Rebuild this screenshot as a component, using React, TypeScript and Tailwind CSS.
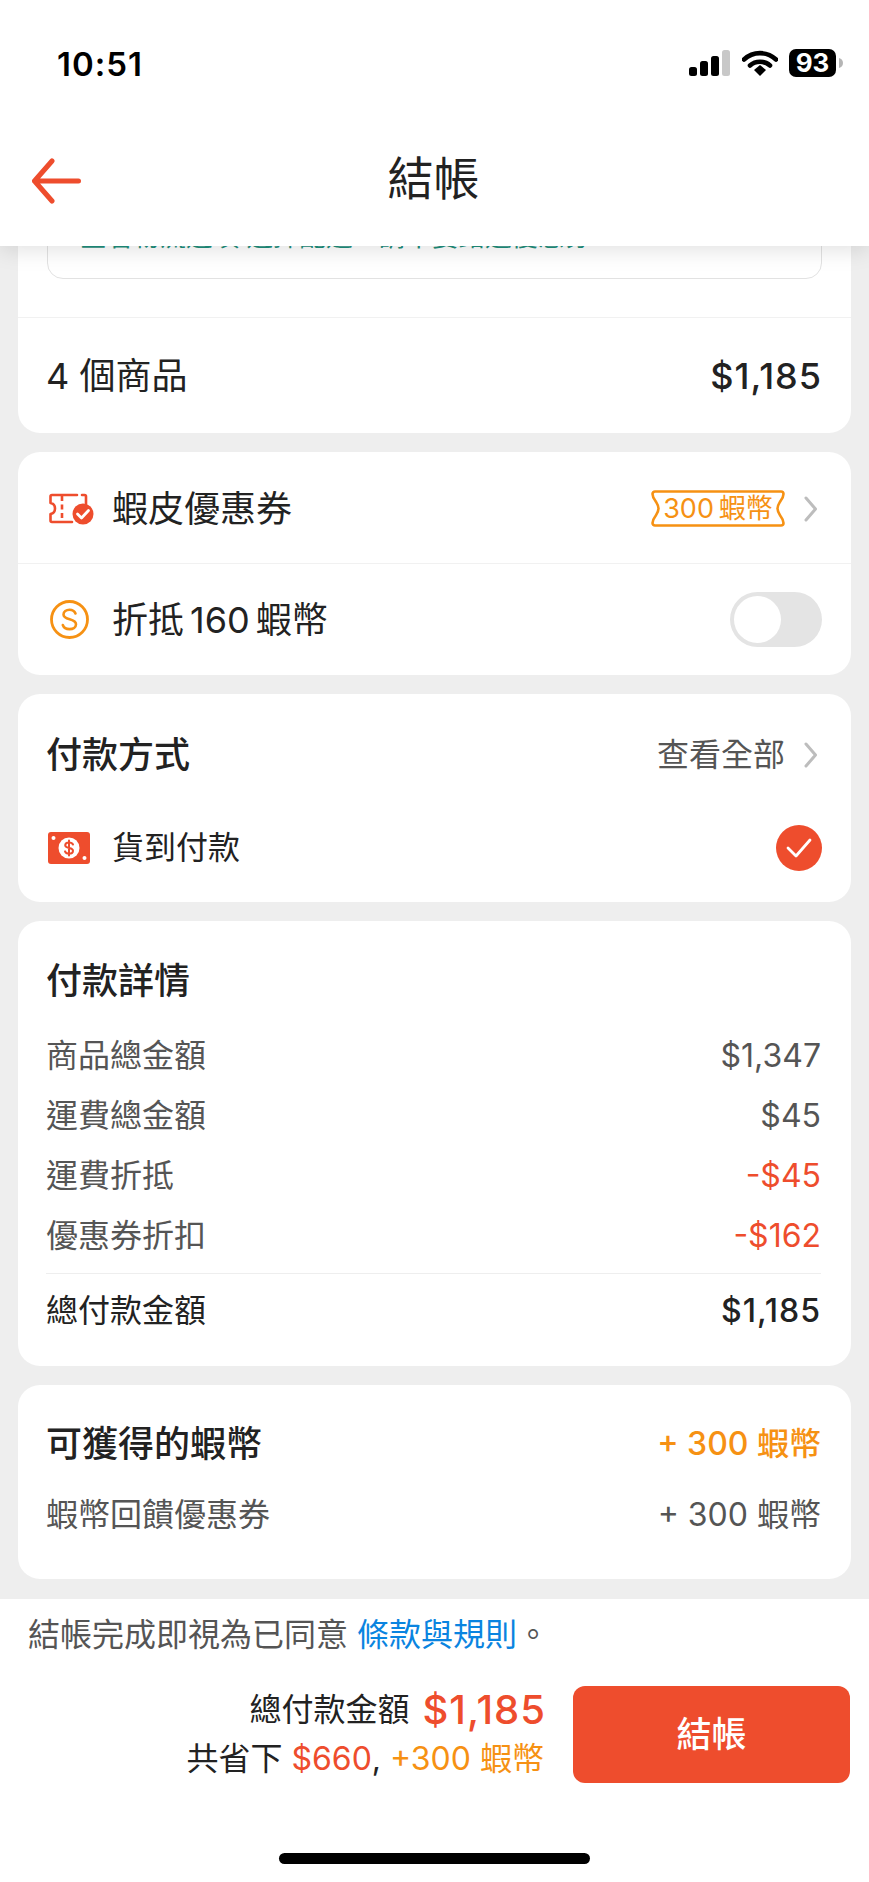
import { ReactNode } from "react";

const Chevron = () => (
    <svg width="14" height="26" viewBox="0 0 14 26" fill="none" className="shrink-0">
        <path d="M2 2l9.500 11L2 24" stroke="#bdbdbd" strokeWidth="3" strokeLinecap="round" strokeLinejoin="round" />
    </svg>
);

const Card = ({ className = "", children }: { className?: string; children: ReactNode }) => (
    <section className={`mx-[18px] bg-white rounded-[22px] ${className}`}>{children}</section>
);

const DetailRow = ({ label, value, red }: { label: string; value: string; red?: boolean }) => (
    <div className="h-[60px] flex items-center justify-between">
        <span className="text-[#555555]">{label}</span>
        <span className={red ? "text-[#ee4d2d]" : "text-[#555555]"}>{value}</span>
    </div>
);

export default function App() {
    return (
        <div
            lang="zh-TW"
            className="w-[869px] h-[1882px] flex flex-col overflow-hidden bg-[#eeeeee] text-[#222222] font-['Inter','Noto_Sans_CJK_TC',sans-serif]"
        >
            {/* Status bar + nav */}
            <header className="relative z-10 h-[246px] shrink-0 bg-white shadow-[0_3px_22px_rgba(0,0,0,0.13)]">
                <div className="h-[128px] pt-[47px] pl-[57px] pr-[26px] flex items-start justify-between">
                    <span className="text-[33px] leading-[34px] font-semibold tracking-[1px] text-black">10:51</span>
                    <div className="flex items-center mt-[2px]">
                        <svg width="41" height="26" viewBox="0 0 41 26" className="mr-[12px]">
                            <rect x="0" y="17" width="8" height="9" rx="2.5" fill="#000" />
                            <rect x="11" y="11" width="8" height="15" rx="2.5" fill="#000" />
                            <rect x="22" y="6" width="8" height="20" rx="2.5" fill="#000" />
                            <rect x="33" y="0" width="8" height="26" rx="2.5" fill="#c8c8c8" />
                        </svg>
                        <svg width="36" height="26" viewBox="0 0 36 26" fill="none" className="mr-[11px]">
                            <path d="M2 9.500C11 1 25 1 34 9.500" stroke="#000" strokeWidth="4.600" strokeLinecap="round" />
                            <path d="M8 15.500C13.500 10.500 22.500 10.500 28 15.500" stroke="#000" strokeWidth="4.600" strokeLinecap="round" />
                            <path d="M12 20l6-5 6 5-6 6z" fill="#000" />
                        </svg>
                        <div className="w-[47px] h-[28px] rounded-[7px] bg-black text-white text-[26px] leading-[28px] font-bold text-center">
                            93
                        </div>
                        <svg width="4" height="10" viewBox="0 0 4 10" className="ml-[3px]">
                            <path d="M0 0c2.500.5 4 2.500 4 5s-1.500 4.500-4 5z" fill="#b5b5b5" />
                        </svg>
                    </div>
                </div>
                <div className="h-[98px] pl-[31px] pr-[33px] flex items-center">
                    <div className="flex-1">
                        <svg width="50" height="46" viewBox="0 0 50 46" fill="none" className="mt-[8px]">
                            <path
                                d="M47.500 23H3.500M21 3L3.500 23 21 43"
                                stroke="#ee4d2d"
                                strokeWidth="5"
                                strokeLinecap="round"
                                strokeLinejoin="round"
                            />
                        </svg>
                    </div>
                    <h1 className="text-[46px] leading-[60px] font-normal mt-[2px]">結帳</h1>
                    <div className="flex-1" />
                </div>
            </header>

            <main className="flex-1 overflow-hidden flex flex-col gap-[19px]">
                {/* Order summary */}
                <Card className="rounded-t-none">
                    <div className="px-[29px] pb-[38px]">
                        <div className="-mt-[27px] h-[60px] border border-[#e2e2e2] rounded-[16px] overflow-hidden pl-[32px] text-[26.500px] leading-[34px] text-[#1f8f7c] whitespace-nowrap">
                            <div className="-mt-[1px]">查看物流選項 選擇配送，請不要錯過優惠券</div>
                        </div>
                    </div>
                    <div className="h-[116px] pl-[28px] pr-[29px] border-t border-[#f1f1f1] flex items-center justify-between text-[36px]">
                        <span>4 個商品</span>
                        <span className="font-medium tracking-[1px]">$1,185</span>
                    </div>
                </Card>

                {/* Coupon + coins */}
                <Card>
                    <div className="h-[111px] pl-[31px] pr-[33px] pt-[2px] flex items-center text-[36px]">
                        <svg width="45" height="32" viewBox="0 0 45 32" fill="none" className="mr-[18px]">
                            <path
                                d="M28 2H3A1.500 1.500 0 0 0 1.500 3.500V10c3 .5 4.500 2.500 4.500 5.500S4.500 20.500 1.500 21v6.500A1.500 1.500 0 0 0 3 29h20M33 2h2.500A1.500 1.500 0 0 1 37 3.500V11"
                                stroke="#ee4d2d"
                                strokeWidth="2.600"
                                strokeLinejoin="round"
                                strokeLinecap="round"
                            />
                            <path d="M13 3v25" stroke="#ee4d2d" strokeWidth="2.600" strokeDasharray="5 3.500" />
                            <circle cx="34" cy="21" r="10.500" fill="#ee4d2d" />
                            <path d="M28.500 21l4 4 7-7.500" stroke="#fff" strokeWidth="2.800" strokeLinecap="round" strokeLinejoin="round" />
                        </svg>
                        <span className="flex-1">蝦皮優惠券</span>
                        <div className="relative w-[134px] h-[37px] mr-[19px] flex items-center justify-center text-[27px] leading-[37px] text-[#f69113]">
                            <svg width="134" height="37" viewBox="0 0 134 37" fill="none" className="absolute inset-0">
                                <path
                                    d="M4 1.500h126a2.500 2.500 0 0 1 2.500 2.500c0 3-1.500 5-3 7-1.500 2.500-3 4.500-3 7.500s1.500 5 3 7.500c1.500 2 3 4 3 7a2.500 2.500 0 0 1-2.500 2.500H4A2.500 2.500 0 0 1 1.500 33c0-3 1.500-5 3-7 1.500-2.500 3-4.500 3-7.500S6 13.500 4.500 11C3 9 1.500 7 1.500 4A2.500 2.500 0 0 1 4 1.500z"
                                    stroke="#f69113"
                                    strokeWidth="2.600"
                                />
                            </svg>
                            <span className="relative">300{"\u2009"}蝦幣</span>
                        </div>
                        <Chevron />
                    </div>
                    <div className="h-[112px] pl-[32px] pr-[29px] border-t border-[#f1f1f1] flex items-center text-[36px]">
                        <svg width="39" height="39" viewBox="0 0 39 39" fill="none" className="mr-[23px]">
                            <circle cx="19.500" cy="19.500" r="18" stroke="#f69113" strokeWidth="2.800" />
                            <path
                                d="M25.500 13.500c-1-2.500-3.300-3.800-6-3.800-3.300 0-6 1.800-6 4.800 0 6.300 12.500 3.300 12.500 9.800 0 3-2.800 4.800-6.500 4.800-3.200 0-5.800-1.500-6.700-4.100"
                                stroke="#f69113"
                                strokeWidth="2.600"
                                strokeLinecap="round"
                            />
                        </svg>
                        <div className="flex-1 flex items-center">
                            <span>折抵</span>
                            <span className="mx-[6px]">160</span>
                            <span>蝦幣</span>
                        </div>
                        <div className="w-[92px] h-[55px] rounded-full bg-[#e4e4e4] p-[4px]">
                            <div className="w-[47px] h-[47px] rounded-full bg-white" />
                        </div>
                    </div>
                </Card>

                {/* Payment method */}
                <Card className="h-[208px] pl-[28px] pr-[29px]">
                    <div className="h-[118px] pt-[4px] flex items-center text-[36px] pr-[4px]">
                        <span className="flex-1 font-medium">付款方式</span>
                        <span className="text-[32px] text-[#555555] mr-[19px]">查看全部</span>
                        <Chevron />
                    </div>
                    <div className="flex items-center text-[32px] mt-[6px] h-[60px] pl-[2px]">
                        <svg width="42" height="32" viewBox="0 0 42 32" className="mr-[22px]">
                            <rect width="42" height="32" rx="3" fill="#ee4d2d" />
                            <circle cx="21" cy="16" r="10.500" fill="#fff" />
                            <circle cx="5.500" cy="6" r="2" fill="#fff" />
                            <circle cx="36.500" cy="26" r="2" fill="#fff" />
                            <path
                                d="M25 12.500c-.6-1.300-2-2-4-2-2.200 0-3.800 1.100-3.800 2.800 0 3.700 7.800 1.700 7.800 5.400 0 1.800-1.800 2.900-4 2.900-2 0-3.500-.8-4-2.200M21 8.500v15"
                                fill="none"
                                stroke="#ee4d2d"
                                strokeWidth="2"
                                strokeLinecap="round"
                            />
                        </svg>
                        <span className="flex-1">貨到付款</span>
                        <div className="w-[46px] h-[46px] rounded-full bg-[#ee4d2d] flex items-center justify-center">
                            <svg width="26" height="20" viewBox="0 0 26 20" fill="none">
                                <path d="M2 10l8 8L24 2" stroke="#fff" strokeWidth="2.800" strokeLinecap="round" strokeLinejoin="round" />
                            </svg>
                        </div>
                    </div>
                </Card>

                {/* Payment details */}
                <Card className="h-[445px] pl-[28px] pr-[30px] text-[32px]">
                    <div className="h-[105px] pt-[14px] flex items-center text-[36px] font-medium">付款詳情</div>
                    <DetailRow label="商品總金額" value="$1,347" />
                    <DetailRow label="運費總金額" value="$45" />
                    <DetailRow label="運費折抵" value="-$45" red />
                    <DetailRow label="優惠券折扣" value="-$162" red />
                    <div className="mt-[7px] pt-[2px] h-[73px] border-t border-[#eeeeee] flex items-center justify-between">
                        <span>總付款金額</span>
                        <span className="font-medium tracking-[1px]">$1,185</span>
                    </div>
                </Card>

                {/* Coins earned */}
                <Card className="h-[194px] pl-[28px] pr-[30px]">
                    <div className="h-[92px] pt-[26px] flex items-center justify-between">
                        <span className="text-[36px] font-medium">可獲得的蝦幣</span>
                        <span className="text-[32px] font-medium text-[#f69113]">+ 300 蝦幣</span>
                    </div>
                    <div className="h-[52px] mt-[12px] flex items-center justify-between text-[32px] text-[#555555]">
                        <span>蝦幣回饋優惠券</span>
                        <span>+ 300 蝦幣</span>
                    </div>
                </Card>
            </main>

            {/* Bottom bar */}
            <footer className="h-[283px] shrink-0 bg-white pt-[14px]">
                <p className="pl-[28px] text-[32px] leading-[44px] text-[#555555]">
                    結帳完成即視為已同意 <span className="text-[#0a84e0]">條款與規則</span>。
                </p>
                <div className="mt-[28px] pr-[19px] flex items-center justify-end gap-[29px]">
                    <div className="flex flex-col items-end text-[32px]">
                        <div className="h-[50px] -mr-[2px] flex items-center gap-[13px]">
                            <span>總付款金額</span>
                            <span className="text-[40px] font-medium tracking-[1px] text-[#ee4d2d]">$1,185</span>
                        </div>
                        <div className="h-[48px] flex items-center whitespace-pre">
                            <span>共省下 </span>
                            <span className="text-[#ee4d2d]">$660</span>
                            <span>, </span>
                            <span className="text-[#f69113]">+300 蝦幣</span>
                        </div>
                    </div>
                    <button className="w-[277px] h-[97px] rounded-[12px] bg-[#ee4d2d] text-white text-[35px] font-medium">
                        結帳
                    </button>
                </div>
                <div className="mt-[70px] mx-auto w-[311px] h-[11px] rounded-full bg-black" />
            </footer>
        </div>
    );
}
